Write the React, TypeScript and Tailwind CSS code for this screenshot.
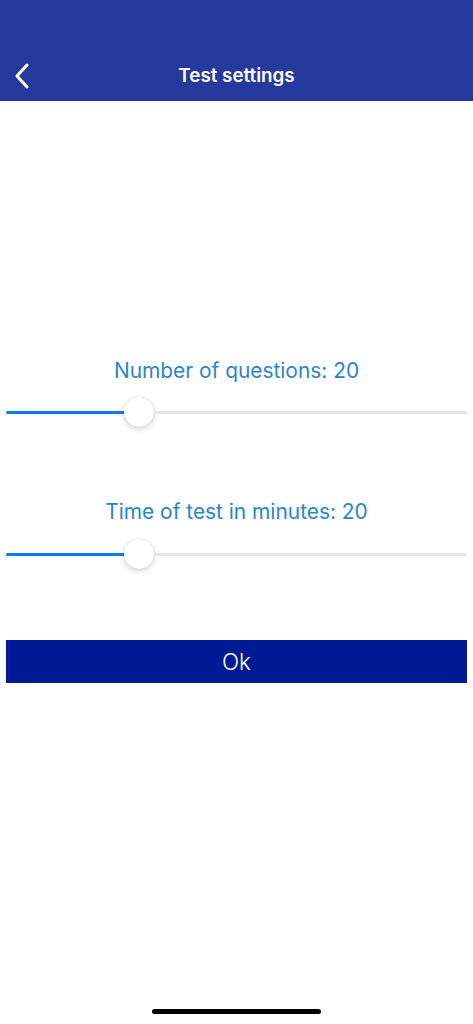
import React from "react";

function Slider({ pos }: { pos: number }) {
  return (
    <div className="h-[32px] mx-[6px] flex items-center">
      <div className="h-[3px] rounded-l-full bg-[#0a7aff]" style={{ width: pos - 15 }} />
      <div className="w-[30px] h-[30px] shrink-0 rounded-full bg-white shadow-[0_2px_6px_rgba(0,0,0,0.18),0_0_1px_rgba(0,0,0,0.2)]" />
      <div className="flex-1 h-[3px] rounded-r-full bg-[#e4e4e4]" />
    </div>
  );
}

export default function App() {
  return (
    <div className="w-[473px] h-[1024px] bg-white flex flex-col overflow-hidden" style={{ fontFamily: "Inter, 'Noto Sans', sans-serif" }}>
      <header className="h-[101px] bg-[#263a9e] flex items-end shrink-0">
        <div className="w-full h-[50px] grid grid-cols-[60px_1fr_60px] items-center">
          <div className="pl-[13px] flex items-center">
            <svg width="18" height="26" viewBox="0 0 18 26" fill="none">
              <path d="M14 2 L4 13 L14 24" stroke="white" strokeWidth="3" strokeLinecap="round" strokeLinejoin="round" />
            </svg>
          </div>
          <span className="text-center text-white text-[18.8px] font-semibold">Test settings</span>
          <div />
        </div>
      </header>
      <main className="pt-[258px] flex flex-col">
        <div className="text-center text-[20.9px] leading-[24px] text-[#2a86cc]">Number of questions: 20</div>
        <div className="mt-[13px]">
          <Slider pos={133} />
        </div>
        <div className="mt-[72px] text-center text-[20.9px] leading-[24px] text-[#2a86cc]">Time of test in minutes: 20</div>
        <div className="mt-[14px]">
          <Slider pos={133} />
        </div>
        <button className="mt-[70px] mx-[6px] h-[43px] bg-[#001a96] text-white text-[22.5px] font-light flex items-center justify-center">
          Ok
        </button>
      </main>
      <div className="mt-auto mb-[10px] mx-auto w-[169px] h-[5px] rounded-full bg-black" />
    </div>
  );
}
